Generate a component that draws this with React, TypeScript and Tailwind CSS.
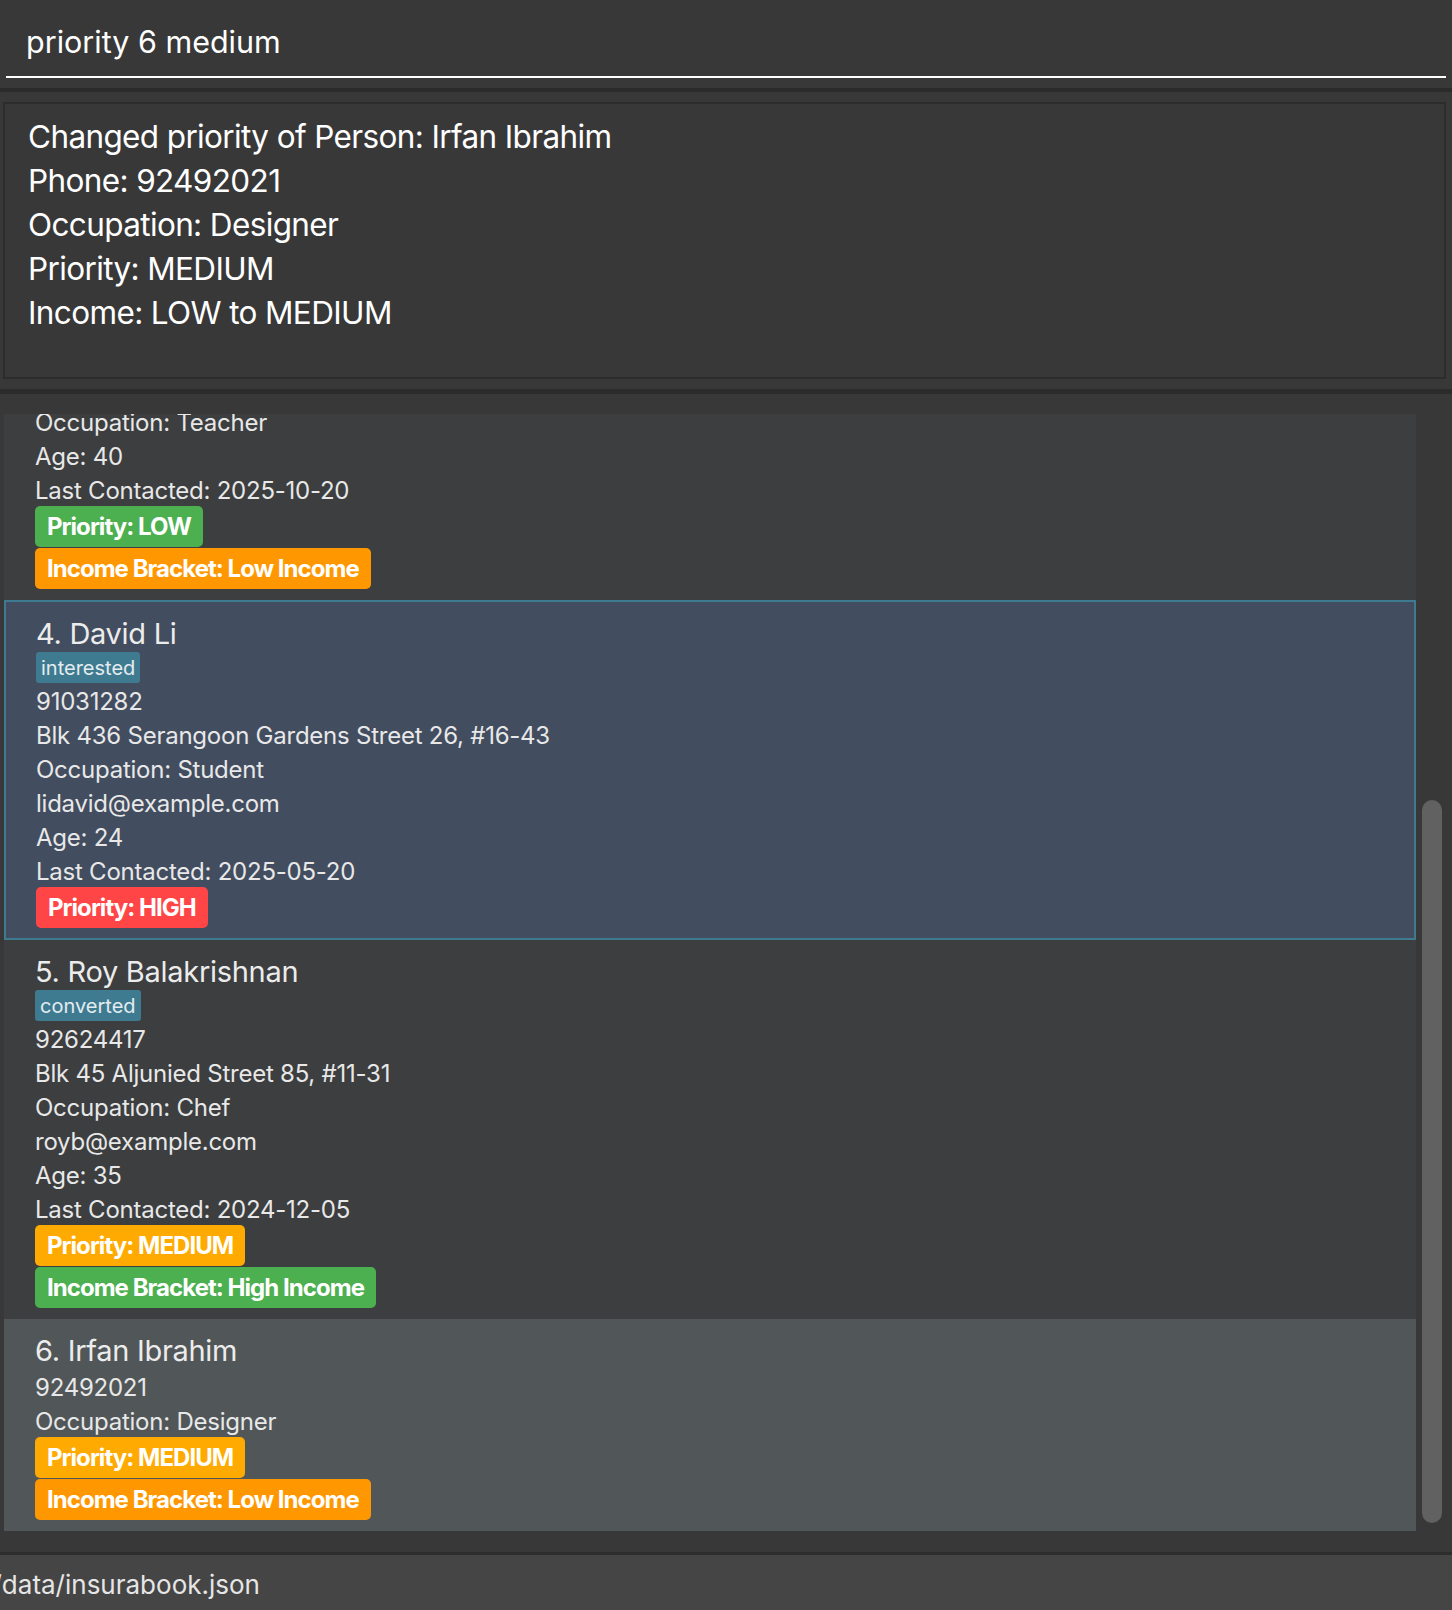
import { useLayoutEffect, useRef } from "react";

type Person = {
    id: number;
    name?: string;
    tag?: string;
    phone?: string;
    address?: string;
    occupation: string;
    email?: string;
    age?: number;
    lastContacted?: string;
    priority: "LOW" | "MEDIUM" | "HIGH";
    income?: "Low Income" | "High Income";
    rowBg: string;
    selected?: boolean;
};

// card 3 is scrolled mostly out of view, only its lower rows are kept
const persons: Person[] = [
    {
        id: 3,
        occupation: "Teacher",
        age: 40,
        lastContacted: "2025-10-20",
        priority: "LOW",
        income: "Low Income",
        rowBg: "bg-[#3c3e3f]",
    },
    {
        id: 4,
        name: "David Li",
        tag: "interested",
        phone: "91031282",
        address: "Blk 436 Serangoon Gardens Street 26, #16-43",
        occupation: "Student",
        email: "lidavid@example.com",
        age: 24,
        lastContacted: "2025-05-20",
        priority: "HIGH",
        rowBg: "bg-[#424d5f]",
        selected: true,
    },
    {
        id: 5,
        name: "Roy Balakrishnan",
        tag: "converted",
        phone: "92624417",
        address: "Blk 45 Aljunied Street 85, #11-31",
        occupation: "Chef",
        email: "royb@example.com",
        age: 35,
        lastContacted: "2024-12-05",
        priority: "MEDIUM",
        income: "High Income",
        rowBg: "bg-[#3c3e3f]",
    },
    {
        id: 6,
        name: "Irfan Ibrahim",
        phone: "92492021",
        occupation: "Designer",
        priority: "MEDIUM",
        income: "Low Income",
        rowBg: "bg-[#515658]",
    },
];

const priorityColor = {
    LOW: "bg-[#4caf50]",
    MEDIUM: "bg-[#ffaa00]",
    HIGH: "bg-[#ff4545]",
};

const incomeColor = {
    "Low Income": "bg-[#ff9800]",
    "High Income": "bg-[#4caf50]",
};

const resultLines = [
    "Changed priority of Person: Irfan Ibrahim",
    "Phone: 92492021",
    "Occupation: Designer",
    "Priority: MEDIUM",
    "Income: LOW to MEDIUM",
];

const Line = ({ children }: { children: React.ReactNode }) => (
    <p className="h-[34px] leading-[38px] text-[24px] tracking-[-0.01em] text-[#e8e8e8]">{children}</p>
);

const Badge = ({ color, children }: { color: string; children: React.ReactNode }) => (
    <span className={`${color} w-fit h-[41px] leading-[41px] px-[12px] rounded-[5px] text-white text-[24px] font-bold tracking-[-0.04em]`}>
        {children}
    </span>
);

const PersonCard = ({ p }: { p: Person }) => (
    <div
        className={`${p.rowBg} border-2 flex flex-col ${
            p.selected ? "border-[#3e7b91] pl-[30px] pt-[12px] pb-[10px]" : "border-transparent pl-[29px] pt-[10px] pb-[9px]"
        }`}
    >
        {p.name && (
            <p className="h-[38px] leading-[40px] text-[29px] tracking-[-0.01em] text-[#ececec]">
                {p.id}. {p.name}
            </p>
        )}
        {p.tag && (
            <span className="w-fit h-[31px] leading-[32px] px-[5px] rounded-[3px] bg-[#3e7b91] text-[#e4ecf0] text-[20px]">
                {p.tag}
            </span>
        )}
        {p.phone && <Line>{p.phone}</Line>}
        {p.address && <Line>{p.address}</Line>}
        <Line>Occupation: {p.occupation}</Line>
        {p.email && <Line>{p.email}</Line>}
        {p.age !== undefined && <Line>Age: {p.age}</Line>}
        {p.lastContacted && <Line>Last Contacted: {p.lastContacted}</Line>}
        <div className="flex flex-col gap-[1px]">
            <Badge color={priorityColor[p.priority]}>Priority: {p.priority}</Badge>
            {p.income && <Badge color={incomeColor[p.income]}>Income Bracket: {p.income}</Badge>}
        </div>
    </div>
);

export default function App() {
    const listRef = useRef<HTMLDivElement>(null);

    useLayoutEffect(() => {
        const el = listRef.current;
        if (el) el.scrollTop = el.scrollHeight;
    }, []);

    return (
        <div className="w-[1452px] h-[1610px] flex flex-col bg-[#383838] overflow-hidden font-['Inter','Liberation_Sans',sans-serif] text-white">
            {/* command box */}
            <div className="h-[88px] px-[6px] bg-[#383838]">
                <div className="h-[78px] border-b-2 border-white pl-[20px] pt-[24px]">
                    <p className="text-[30.5px] leading-[36px] text-white">priority 6 medium</p>
                </div>
            </div>
            <div className="h-[4px] bg-[#2b2b2b]" />

            {/* result display */}
            <div className="h-[297px] pl-[3px] pr-[6px] pt-[10px]">
                <div className="h-[277px] border-2 border-[#2c2c2c] pl-[23px] pt-[11px]">
                    {resultLines.map((l) => (
                        <p key={l} className="h-[44px] leading-[44px] text-[31.5px] tracking-[-0.02em] text-white">
                            {l}
                        </p>
                    ))}
                </div>
            </div>
            <div className="h-[5px] bg-[#2b2b2b]" />

            {/* person list */}
            <div className="h-[1158px] pt-[20px] pb-[21px] pl-[4px] flex gap-[6px]">
                <div ref={listRef} className="w-[1412px] h-full overflow-hidden flex flex-col">
                    {persons.map((p) => (
                        <PersonCard key={p.id} p={p} />
                    ))}
                </div>
                <div className="w-[20px] h-full flex flex-col justify-end pb-[8px]">
                    <div className="h-[723px] rounded-full bg-[#616161]" />
                </div>
            </div>

            {/* status bar */}
            <div className="h-[3px] bg-[#2d2d2d]" />
            <div className="flex-1 bg-[#454545] flex items-center">
                <p className="-ml-[15px] pt-[4px] text-[26px] text-[#e6e6e6]">./data/insurabook.json</p>
            </div>
        </div>
    );
}
